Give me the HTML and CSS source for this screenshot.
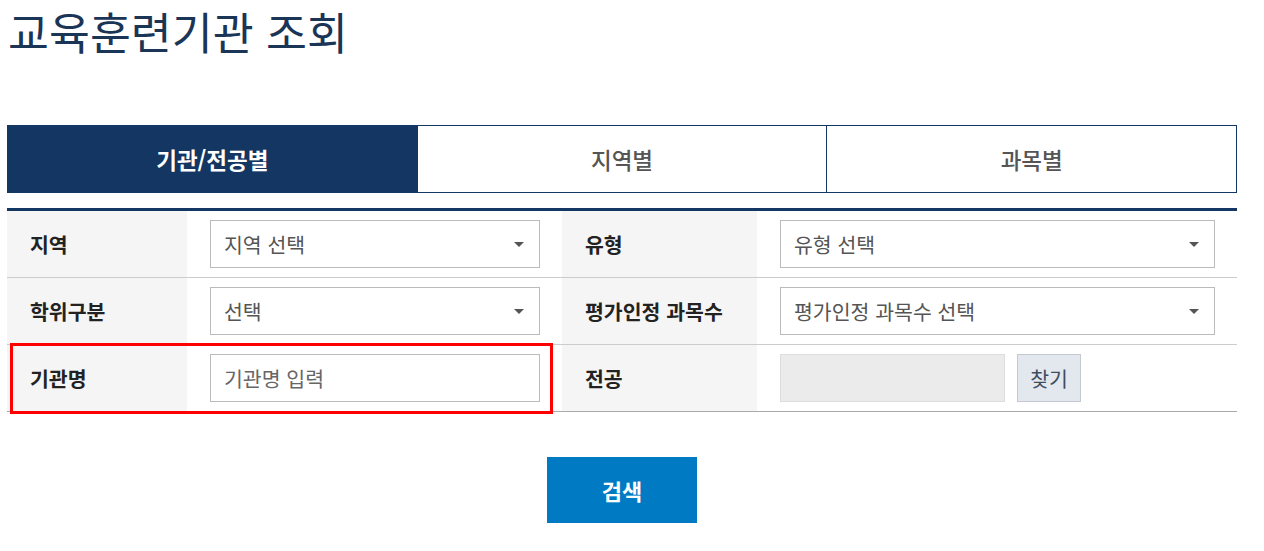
FILE: index.html
```html
<!DOCTYPE html>
<html lang="ko">
<head>
<meta charset="utf-8">
<title>교육훈련기관 조회</title>
<link rel="stylesheet" href="styles.css">
</head>
<body>
<div class="page">
  <h1 class="title">교육훈련기관 조회</h1>

  <div class="tabs">
    <div class="tab active">기관/전공별</div>
    <div class="tab">지역별</div>
    <div class="tab">과목별</div>
  </div>

  <div class="form">
    <div class="row">
      <div class="label">지역</div>
      <div class="field">
        <div class="select"><span>지역 선택</span><svg class="arrow" width="10" height="5" viewBox="0 0 10 5"><path d="M0 0H10L5 5Z" fill="#555"/></svg></div>
      </div>
      <div class="label">유형</div>
      <div class="field">
        <div class="select"><span>유형 선택</span><svg class="arrow" width="10" height="5" viewBox="0 0 10 5"><path d="M0 0H10L5 5Z" fill="#555"/></svg></div>
      </div>
    </div>
    <div class="row">
      <div class="label">학위구분</div>
      <div class="field">
        <div class="select"><span>선택</span><svg class="arrow" width="10" height="5" viewBox="0 0 10 5"><path d="M0 0H10L5 5Z" fill="#555"/></svg></div>
      </div>
      <div class="label">평가인정 과목수</div>
      <div class="field">
        <div class="select"><span>평가인정 과목수 선택</span><svg class="arrow" width="10" height="5" viewBox="0 0 10 5"><path d="M0 0H10L5 5Z" fill="#555"/></svg></div>
      </div>
    </div>
    <div class="row last">
      <div class="label">기관명</div>
      <div class="field">
        <div class="input">기관명 입력</div>
      </div>
      <div class="label">전공</div>
      <div class="field">
        <div class="disabled"></div>
        <div class="find">찾기</div>
      </div>
    </div>
    <div class="highlight"></div>
  </div>

  <div class="actions">
    <div class="search">검색</div>
  </div>
</div>
</body>
</html>
```

FILE: styles.css
```css
* { box-sizing: border-box; }

body {
  margin: 0;
  background: #fff;
  font-family: "Noto Sans CJK KR", "Noto Sans", sans-serif;
}

.page {
  width: 1230px;
  margin-left: 7px;
}

.title {
  margin: 4px 0 0 1px;
  font-size: 44.5px;
  line-height: 53px;
  font-weight: 400;
  color: #1b3556;
}

.tabs {
  margin-top: 68px;
  display: flex;
  border: 1px solid #143662;
  height: 68px;
}

.tab {
  flex: 1;
  display: flex;
  align-items: center;
  justify-content: center;
  font-size: 22.5px;
  font-weight: 500;
  color: #555;
}

.tab + .tab { border-left: 1px solid #143662; }

.tab.active {
  background: #143662;
  color: #fff;
  font-weight: 700;
}

.form {
  position: relative;
  margin-top: 15px;
  border-top: 3px solid #143662;
}

.row {
  display: grid;
  grid-template-columns: 180px 375px 195px 480px;
  height: 67px;
  border-bottom: 1px solid #ccc;
}

.row.last { border-bottom-color: #aaa; }

.label {
  background: #f5f5f5;
  display: flex;
  align-items: center;
  padding-left: 23px;
  font-size: 20.5px;
  font-weight: 700;
  color: #222;
}

.field {
  display: flex;
  align-items: center;
  padding: 0 22px 0 23px;
}

.select, .input {
  flex: 1;
  height: 48px;
  border: 1px solid #bbb;
  display: flex;
  align-items: center;
  justify-content: space-between;
  padding: 0 15px 0 13px;
  font-size: 20.5px;
  color: #555;
}

.input { color: #666; }

.disabled {
  width: 225px;
  height: 48px;
  background: #ebebeb;
  border: 1px solid #ddd;
}

.find {
  margin-left: 12px;
  width: 64px;
  height: 48px;
  background: #e3e7ee;
  border: 1px solid #c4c8cf;
  display: flex;
  align-items: center;
  justify-content: center;
  font-size: 20.5px;
  color: #3f4d60;
}

.highlight {
  position: absolute;
  left: 3px;
  top: 132px;
  width: 543px;
  height: 71px;
  border: 3px solid #f00;
}

.actions {
  display: flex;
  justify-content: center;
  margin-top: 45px;
}

.search {
  width: 150px;
  height: 66px;
  background: #007bc3;
  color: #fff;
  font-size: 22px;
  font-weight: 700;
  display: flex;
  align-items: center;
  justify-content: center;
}
```
